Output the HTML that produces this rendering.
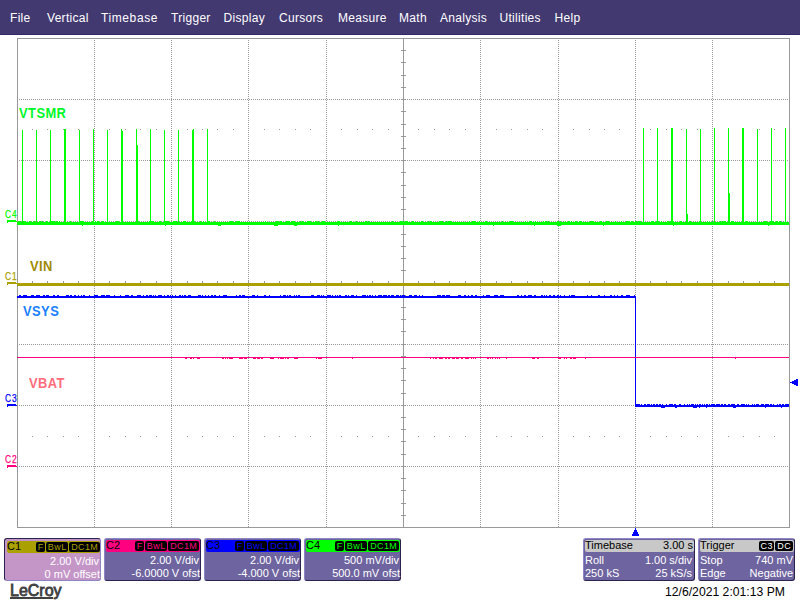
<!DOCTYPE html>
<html><head><meta charset="utf-8">
<style>
*{margin:0;padding:0;box-sizing:border-box}
html,body{width:800px;height:600px;overflow:hidden;background:#fff;font-family:"Liberation Sans",sans-serif}
.a{position:absolute;white-space:nowrap}
#menu{position:absolute;left:0;top:0;width:800px;height:35px;background:#433971;border-bottom:1px solid #302868}
#menu span{position:absolute;top:11px;color:#fff;font-size:12px;line-height:14px;letter-spacing:0.3px}
svg{position:absolute;left:0;top:0}
.lbl{position:absolute;font-weight:bold;font-size:14px;line-height:16px;letter-spacing:0.5px;transform:scaleX(0.92);transform-origin:0 0}
.ch{position:absolute;font-size:10px;line-height:10px;letter-spacing:1px;transform:scaleX(0.84);transform-origin:0 0;-webkit-text-stroke:0.25px currentColor}
.pt{font-size:11px;line-height:11px;color:#fff}
.ht{font-size:11px;line-height:12px;color:#000}
.bd{height:10px;font-size:9px;line-height:11px;text-align:center;border-radius:2px;letter-spacing:0.4px;text-indent:0.4px}
</style></head><body>
<div id="menu">
<span style="left:10px">File</span>
<span style="left:47px">Vertical</span>
<span style="left:101px;letter-spacing:0.6px">Timebase</span>
<span style="left:171px">Trigger</span>
<span style="left:223.5px">Display</span>
<span style="left:279px">Cursors</span>
<span style="left:338px">Measure</span>
<span style="left:399px">Math</span>
<span style="left:440px">Analysis</span>
<span style="left:499.5px">Utilities</span>
<span style="left:554.5px">Help</span>
</div>
<svg width="800" height="600" shape-rendering="crispEdges">
<defs>
<pattern id="pv" width="1" height="2" patternUnits="userSpaceOnUse"><rect width="1" height="1" fill="#999999"/></pattern>
<pattern id="ph" width="2" height="1" patternUnits="userSpaceOnUse"><rect x="1" width="1" height="1" fill="#999999"/></pattern>
</defs>
<rect x="94" y="39" width="1" height="488" fill="url(#pv)"/>
<rect x="171" y="39" width="1" height="488" fill="url(#pv)"/>
<rect x="248" y="39" width="1" height="488" fill="url(#pv)"/>
<rect x="326" y="39" width="1" height="488" fill="url(#pv)"/>
<rect x="480" y="39" width="1" height="488" fill="url(#pv)"/>
<rect x="558" y="39" width="1" height="488" fill="url(#pv)"/>
<rect x="635" y="39" width="1" height="488" fill="url(#pv)"/>
<rect x="712" y="39" width="1" height="488" fill="url(#pv)"/>
<rect x="18" y="99" width="771" height="1" fill="url(#ph)"/>
<rect x="18" y="160" width="771" height="1" fill="url(#ph)"/>
<rect x="18" y="221" width="771" height="1" fill="url(#ph)"/>
<rect x="18" y="344" width="771" height="1" fill="url(#ph)"/>
<rect x="18" y="405" width="771" height="1" fill="url(#ph)"/>
<rect x="18" y="466" width="771" height="1" fill="url(#ph)"/>
<rect x="17" y="38" width="773" height="1" fill="#999999"/>
<rect x="17" y="527" width="773" height="1" fill="#999999"/>
<rect x="17" y="38" width="1" height="490" fill="#999999"/>
<rect x="789" y="38" width="1" height="490" fill="#999999"/>
<rect x="403" y="39" width="1" height="488" fill="#999999"/>
<rect x="18" y="283" width="771" height="1" fill="#999999"/>
<rect x="401" y="50" width="5" height="1" fill="#999999"/>
<rect x="401" y="62" width="5" height="1" fill="#999999"/>
<rect x="401" y="75" width="5" height="1" fill="#999999"/>
<rect x="401" y="87" width="5" height="1" fill="#999999"/>
<rect x="401" y="99" width="5" height="1" fill="#999999"/>
<rect x="401" y="111" width="5" height="1" fill="#999999"/>
<rect x="401" y="124" width="5" height="1" fill="#999999"/>
<rect x="401" y="136" width="5" height="1" fill="#999999"/>
<rect x="401" y="148" width="5" height="1" fill="#999999"/>
<rect x="401" y="160" width="5" height="1" fill="#999999"/>
<rect x="401" y="172" width="5" height="1" fill="#999999"/>
<rect x="401" y="185" width="5" height="1" fill="#999999"/>
<rect x="401" y="197" width="5" height="1" fill="#999999"/>
<rect x="401" y="209" width="5" height="1" fill="#999999"/>
<rect x="401" y="221" width="5" height="1" fill="#999999"/>
<rect x="401" y="234" width="5" height="1" fill="#999999"/>
<rect x="401" y="246" width="5" height="1" fill="#999999"/>
<rect x="401" y="258" width="5" height="1" fill="#999999"/>
<rect x="401" y="270" width="5" height="1" fill="#999999"/>
<rect x="401" y="295" width="5" height="1" fill="#999999"/>
<rect x="401" y="307" width="5" height="1" fill="#999999"/>
<rect x="401" y="319" width="5" height="1" fill="#999999"/>
<rect x="401" y="331" width="5" height="1" fill="#999999"/>
<rect x="401" y="344" width="5" height="1" fill="#999999"/>
<rect x="401" y="356" width="5" height="1" fill="#999999"/>
<rect x="401" y="368" width="5" height="1" fill="#999999"/>
<rect x="401" y="380" width="5" height="1" fill="#999999"/>
<rect x="401" y="393" width="5" height="1" fill="#999999"/>
<rect x="401" y="405" width="5" height="1" fill="#999999"/>
<rect x="401" y="417" width="5" height="1" fill="#999999"/>
<rect x="401" y="429" width="5" height="1" fill="#999999"/>
<rect x="401" y="441" width="5" height="1" fill="#999999"/>
<rect x="401" y="454" width="5" height="1" fill="#999999"/>
<rect x="401" y="466" width="5" height="1" fill="#999999"/>
<rect x="401" y="478" width="5" height="1" fill="#999999"/>
<rect x="401" y="490" width="5" height="1" fill="#999999"/>
<rect x="401" y="503" width="5" height="1" fill="#999999"/>
<rect x="401" y="515" width="5" height="1" fill="#999999"/>
<rect x="32" y="281" width="1" height="5" fill="#999999"/>
<rect x="47" y="281" width="1" height="5" fill="#999999"/>
<rect x="63" y="281" width="1" height="5" fill="#999999"/>
<rect x="78" y="281" width="1" height="5" fill="#999999"/>
<rect x="94" y="281" width="1" height="5" fill="#999999"/>
<rect x="109" y="281" width="1" height="5" fill="#999999"/>
<rect x="125" y="281" width="1" height="5" fill="#999999"/>
<rect x="140" y="281" width="1" height="5" fill="#999999"/>
<rect x="156" y="281" width="1" height="5" fill="#999999"/>
<rect x="171" y="281" width="1" height="5" fill="#999999"/>
<rect x="187" y="281" width="1" height="5" fill="#999999"/>
<rect x="202" y="281" width="1" height="5" fill="#999999"/>
<rect x="217" y="281" width="1" height="5" fill="#999999"/>
<rect x="233" y="281" width="1" height="5" fill="#999999"/>
<rect x="248" y="281" width="1" height="5" fill="#999999"/>
<rect x="264" y="281" width="1" height="5" fill="#999999"/>
<rect x="279" y="281" width="1" height="5" fill="#999999"/>
<rect x="295" y="281" width="1" height="5" fill="#999999"/>
<rect x="310" y="281" width="1" height="5" fill="#999999"/>
<rect x="326" y="281" width="1" height="5" fill="#999999"/>
<rect x="341" y="281" width="1" height="5" fill="#999999"/>
<rect x="357" y="281" width="1" height="5" fill="#999999"/>
<rect x="372" y="281" width="1" height="5" fill="#999999"/>
<rect x="388" y="281" width="1" height="5" fill="#999999"/>
<rect x="403" y="281" width="1" height="5" fill="#999999"/>
<rect x="418" y="281" width="1" height="5" fill="#999999"/>
<rect x="434" y="281" width="1" height="5" fill="#999999"/>
<rect x="449" y="281" width="1" height="5" fill="#999999"/>
<rect x="465" y="281" width="1" height="5" fill="#999999"/>
<rect x="480" y="281" width="1" height="5" fill="#999999"/>
<rect x="496" y="281" width="1" height="5" fill="#999999"/>
<rect x="511" y="281" width="1" height="5" fill="#999999"/>
<rect x="527" y="281" width="1" height="5" fill="#999999"/>
<rect x="542" y="281" width="1" height="5" fill="#999999"/>
<rect x="558" y="281" width="1" height="5" fill="#999999"/>
<rect x="573" y="281" width="1" height="5" fill="#999999"/>
<rect x="589" y="281" width="1" height="5" fill="#999999"/>
<rect x="604" y="281" width="1" height="5" fill="#999999"/>
<rect x="619" y="281" width="1" height="5" fill="#999999"/>
<rect x="635" y="281" width="1" height="5" fill="#999999"/>
<rect x="650" y="281" width="1" height="5" fill="#999999"/>
<rect x="666" y="281" width="1" height="5" fill="#999999"/>
<rect x="681" y="281" width="1" height="5" fill="#999999"/>
<rect x="697" y="281" width="1" height="5" fill="#999999"/>
<rect x="712" y="281" width="1" height="5" fill="#999999"/>
<rect x="728" y="281" width="1" height="5" fill="#999999"/>
<rect x="743" y="281" width="1" height="5" fill="#999999"/>
<rect x="759" y="281" width="1" height="5" fill="#999999"/>
<rect x="774" y="281" width="1" height="5" fill="#999999"/>
<rect x="32" y="129" width="1" height="1" fill="#999999"/>
<rect x="32" y="436" width="1" height="1" fill="#999999"/>
<rect x="47" y="129" width="1" height="1" fill="#999999"/>
<rect x="47" y="436" width="1" height="1" fill="#999999"/>
<rect x="63" y="129" width="1" height="1" fill="#999999"/>
<rect x="63" y="436" width="1" height="1" fill="#999999"/>
<rect x="78" y="129" width="1" height="1" fill="#999999"/>
<rect x="78" y="436" width="1" height="1" fill="#999999"/>
<rect x="109" y="129" width="1" height="1" fill="#999999"/>
<rect x="109" y="436" width="1" height="1" fill="#999999"/>
<rect x="125" y="129" width="1" height="1" fill="#999999"/>
<rect x="125" y="436" width="1" height="1" fill="#999999"/>
<rect x="140" y="129" width="1" height="1" fill="#999999"/>
<rect x="140" y="436" width="1" height="1" fill="#999999"/>
<rect x="156" y="129" width="1" height="1" fill="#999999"/>
<rect x="156" y="436" width="1" height="1" fill="#999999"/>
<rect x="187" y="129" width="1" height="1" fill="#999999"/>
<rect x="187" y="436" width="1" height="1" fill="#999999"/>
<rect x="202" y="129" width="1" height="1" fill="#999999"/>
<rect x="202" y="436" width="1" height="1" fill="#999999"/>
<rect x="217" y="129" width="1" height="1" fill="#999999"/>
<rect x="217" y="436" width="1" height="1" fill="#999999"/>
<rect x="233" y="129" width="1" height="1" fill="#999999"/>
<rect x="233" y="436" width="1" height="1" fill="#999999"/>
<rect x="264" y="129" width="1" height="1" fill="#999999"/>
<rect x="264" y="436" width="1" height="1" fill="#999999"/>
<rect x="279" y="129" width="1" height="1" fill="#999999"/>
<rect x="279" y="436" width="1" height="1" fill="#999999"/>
<rect x="295" y="129" width="1" height="1" fill="#999999"/>
<rect x="295" y="436" width="1" height="1" fill="#999999"/>
<rect x="310" y="129" width="1" height="1" fill="#999999"/>
<rect x="310" y="436" width="1" height="1" fill="#999999"/>
<rect x="341" y="129" width="1" height="1" fill="#999999"/>
<rect x="341" y="436" width="1" height="1" fill="#999999"/>
<rect x="357" y="129" width="1" height="1" fill="#999999"/>
<rect x="357" y="436" width="1" height="1" fill="#999999"/>
<rect x="372" y="129" width="1" height="1" fill="#999999"/>
<rect x="372" y="436" width="1" height="1" fill="#999999"/>
<rect x="388" y="129" width="1" height="1" fill="#999999"/>
<rect x="388" y="436" width="1" height="1" fill="#999999"/>
<rect x="418" y="129" width="1" height="1" fill="#999999"/>
<rect x="418" y="436" width="1" height="1" fill="#999999"/>
<rect x="434" y="129" width="1" height="1" fill="#999999"/>
<rect x="434" y="436" width="1" height="1" fill="#999999"/>
<rect x="449" y="129" width="1" height="1" fill="#999999"/>
<rect x="449" y="436" width="1" height="1" fill="#999999"/>
<rect x="465" y="129" width="1" height="1" fill="#999999"/>
<rect x="465" y="436" width="1" height="1" fill="#999999"/>
<rect x="496" y="129" width="1" height="1" fill="#999999"/>
<rect x="496" y="436" width="1" height="1" fill="#999999"/>
<rect x="511" y="129" width="1" height="1" fill="#999999"/>
<rect x="511" y="436" width="1" height="1" fill="#999999"/>
<rect x="527" y="129" width="1" height="1" fill="#999999"/>
<rect x="527" y="436" width="1" height="1" fill="#999999"/>
<rect x="542" y="129" width="1" height="1" fill="#999999"/>
<rect x="542" y="436" width="1" height="1" fill="#999999"/>
<rect x="573" y="129" width="1" height="1" fill="#999999"/>
<rect x="573" y="436" width="1" height="1" fill="#999999"/>
<rect x="589" y="129" width="1" height="1" fill="#999999"/>
<rect x="589" y="436" width="1" height="1" fill="#999999"/>
<rect x="604" y="129" width="1" height="1" fill="#999999"/>
<rect x="604" y="436" width="1" height="1" fill="#999999"/>
<rect x="619" y="129" width="1" height="1" fill="#999999"/>
<rect x="619" y="436" width="1" height="1" fill="#999999"/>
<rect x="650" y="129" width="1" height="1" fill="#999999"/>
<rect x="650" y="436" width="1" height="1" fill="#999999"/>
<rect x="666" y="129" width="1" height="1" fill="#999999"/>
<rect x="666" y="436" width="1" height="1" fill="#999999"/>
<rect x="681" y="129" width="1" height="1" fill="#999999"/>
<rect x="681" y="436" width="1" height="1" fill="#999999"/>
<rect x="697" y="129" width="1" height="1" fill="#999999"/>
<rect x="697" y="436" width="1" height="1" fill="#999999"/>
<rect x="728" y="129" width="1" height="1" fill="#999999"/>
<rect x="728" y="436" width="1" height="1" fill="#999999"/>
<rect x="743" y="129" width="1" height="1" fill="#999999"/>
<rect x="743" y="436" width="1" height="1" fill="#999999"/>
<rect x="759" y="129" width="1" height="1" fill="#999999"/>
<rect x="759" y="436" width="1" height="1" fill="#999999"/>
<rect x="774" y="129" width="1" height="1" fill="#999999"/>
<rect x="774" y="436" width="1" height="1" fill="#999999"/>
<rect x="17" y="222" width="772" height="3" fill="#00ff00"/>
<rect x="18" y="221" width="3" height="1" fill="#00ff00"/>
<rect x="22" y="221" width="4" height="1" fill="#00ff00"/>
<rect x="29" y="221" width="2" height="1" fill="#00ff00"/>
<rect x="33" y="221" width="2" height="1" fill="#00ff00"/>
<rect x="36" y="221" width="1" height="1" fill="#00ff00"/>
<rect x="39" y="221" width="2" height="1" fill="#00ff00"/>
<rect x="42" y="221" width="1" height="1" fill="#00ff00"/>
<rect x="46" y="221" width="2" height="1" fill="#00ff00"/>
<rect x="51" y="221" width="4" height="1" fill="#00ff00"/>
<rect x="56" y="221" width="2" height="1" fill="#00ff00"/>
<rect x="59" y="221" width="1" height="1" fill="#00ff00"/>
<rect x="64" y="221" width="2" height="1" fill="#00ff00"/>
<rect x="70" y="221" width="1" height="1" fill="#00ff00"/>
<rect x="80" y="221" width="4" height="1" fill="#00ff00"/>
<rect x="92" y="221" width="2" height="1" fill="#00ff00"/>
<rect x="95" y="221" width="1" height="1" fill="#00ff00"/>
<rect x="97" y="221" width="2" height="1" fill="#00ff00"/>
<rect x="102" y="221" width="2" height="1" fill="#00ff00"/>
<rect x="116" y="221" width="3" height="1" fill="#00ff00"/>
<rect x="137" y="221" width="2" height="1" fill="#00ff00"/>
<rect x="149" y="221" width="1" height="1" fill="#00ff00"/>
<rect x="151" y="221" width="3" height="1" fill="#00ff00"/>
<rect x="159" y="221" width="2" height="1" fill="#00ff00"/>
<rect x="165" y="221" width="4" height="1" fill="#00ff00"/>
<rect x="173" y="221" width="4" height="1" fill="#00ff00"/>
<rect x="183" y="221" width="3" height="1" fill="#00ff00"/>
<rect x="191" y="221" width="2" height="1" fill="#00ff00"/>
<rect x="194" y="221" width="1" height="1" fill="#00ff00"/>
<rect x="200" y="221" width="1" height="1" fill="#00ff00"/>
<rect x="203" y="221" width="1" height="1" fill="#00ff00"/>
<rect x="208" y="221" width="2" height="1" fill="#00ff00"/>
<rect x="214" y="221" width="1" height="1" fill="#00ff00"/>
<rect x="229" y="221" width="4" height="1" fill="#00ff00"/>
<rect x="236" y="221" width="4" height="1" fill="#00ff00"/>
<rect x="265" y="221" width="1" height="1" fill="#00ff00"/>
<rect x="276" y="221" width="3" height="1" fill="#00ff00"/>
<rect x="280" y="221" width="2" height="1" fill="#00ff00"/>
<rect x="286" y="221" width="4" height="1" fill="#00ff00"/>
<rect x="292" y="221" width="3" height="1" fill="#00ff00"/>
<rect x="300" y="221" width="1" height="1" fill="#00ff00"/>
<rect x="302" y="221" width="2" height="1" fill="#00ff00"/>
<rect x="307" y="221" width="4" height="1" fill="#00ff00"/>
<rect x="315" y="221" width="2" height="1" fill="#00ff00"/>
<rect x="318" y="221" width="1" height="1" fill="#00ff00"/>
<rect x="322" y="221" width="3" height="1" fill="#00ff00"/>
<rect x="337" y="221" width="3" height="1" fill="#00ff00"/>
<rect x="350" y="221" width="2" height="1" fill="#00ff00"/>
<rect x="356" y="221" width="1" height="1" fill="#00ff00"/>
<rect x="365" y="221" width="2" height="1" fill="#00ff00"/>
<rect x="368" y="221" width="1" height="1" fill="#00ff00"/>
<rect x="392" y="221" width="1" height="1" fill="#00ff00"/>
<rect x="400" y="221" width="4" height="1" fill="#00ff00"/>
<rect x="405" y="221" width="3" height="1" fill="#00ff00"/>
<rect x="412" y="221" width="2" height="1" fill="#00ff00"/>
<rect x="421" y="221" width="2" height="1" fill="#00ff00"/>
<rect x="428" y="221" width="1" height="1" fill="#00ff00"/>
<rect x="430" y="221" width="2" height="1" fill="#00ff00"/>
<rect x="439" y="221" width="4" height="1" fill="#00ff00"/>
<rect x="446" y="221" width="1" height="1" fill="#00ff00"/>
<rect x="448" y="221" width="4" height="1" fill="#00ff00"/>
<rect x="469" y="221" width="1" height="1" fill="#00ff00"/>
<rect x="472" y="221" width="4" height="1" fill="#00ff00"/>
<rect x="479" y="221" width="1" height="1" fill="#00ff00"/>
<rect x="485" y="221" width="2" height="1" fill="#00ff00"/>
<rect x="502" y="221" width="1" height="1" fill="#00ff00"/>
<rect x="509" y="221" width="4" height="1" fill="#00ff00"/>
<rect x="525" y="221" width="1" height="1" fill="#00ff00"/>
<rect x="529" y="221" width="3" height="1" fill="#00ff00"/>
<rect x="535" y="221" width="1" height="1" fill="#00ff00"/>
<rect x="543" y="221" width="1" height="1" fill="#00ff00"/>
<rect x="545" y="221" width="2" height="1" fill="#00ff00"/>
<rect x="548" y="221" width="1" height="1" fill="#00ff00"/>
<rect x="557" y="221" width="2" height="1" fill="#00ff00"/>
<rect x="560" y="221" width="1" height="1" fill="#00ff00"/>
<rect x="565" y="221" width="1" height="1" fill="#00ff00"/>
<rect x="568" y="221" width="2" height="1" fill="#00ff00"/>
<rect x="571" y="221" width="1" height="1" fill="#00ff00"/>
<rect x="575" y="221" width="2" height="1" fill="#00ff00"/>
<rect x="579" y="221" width="3" height="1" fill="#00ff00"/>
<rect x="590" y="221" width="4" height="1" fill="#00ff00"/>
<rect x="600" y="221" width="2" height="1" fill="#00ff00"/>
<rect x="606" y="221" width="3" height="1" fill="#00ff00"/>
<rect x="615" y="221" width="1" height="1" fill="#00ff00"/>
<rect x="621" y="221" width="1" height="1" fill="#00ff00"/>
<rect x="626" y="221" width="4" height="1" fill="#00ff00"/>
<rect x="631" y="221" width="2" height="1" fill="#00ff00"/>
<rect x="635" y="221" width="2" height="1" fill="#00ff00"/>
<rect x="638" y="221" width="3" height="1" fill="#00ff00"/>
<rect x="651" y="221" width="3" height="1" fill="#00ff00"/>
<rect x="656" y="221" width="3" height="1" fill="#00ff00"/>
<rect x="661" y="221" width="1" height="1" fill="#00ff00"/>
<rect x="667" y="221" width="2" height="1" fill="#00ff00"/>
<rect x="670" y="221" width="1" height="1" fill="#00ff00"/>
<rect x="673" y="221" width="1" height="1" fill="#00ff00"/>
<rect x="680" y="221" width="2" height="1" fill="#00ff00"/>
<rect x="686" y="221" width="2" height="1" fill="#00ff00"/>
<rect x="689" y="221" width="2" height="1" fill="#00ff00"/>
<rect x="699" y="221" width="2" height="1" fill="#00ff00"/>
<rect x="707" y="221" width="1" height="1" fill="#00ff00"/>
<rect x="712" y="221" width="1" height="1" fill="#00ff00"/>
<rect x="720" y="221" width="1" height="1" fill="#00ff00"/>
<rect x="722" y="221" width="4" height="1" fill="#00ff00"/>
<rect x="731" y="221" width="3" height="1" fill="#00ff00"/>
<rect x="743" y="221" width="1" height="1" fill="#00ff00"/>
<rect x="745" y="221" width="3" height="1" fill="#00ff00"/>
<rect x="764" y="221" width="3" height="1" fill="#00ff00"/>
<rect x="770" y="221" width="4" height="1" fill="#00ff00"/>
<rect x="776" y="221" width="2" height="1" fill="#00ff00"/>
<rect x="779" y="221" width="2" height="1" fill="#00ff00"/>
<rect x="82" y="225" width="1" height="1" fill="#00ff00"/>
<rect x="165" y="225" width="1" height="1" fill="#00ff00"/>
<rect x="218" y="225" width="3" height="1" fill="#00ff00"/>
<rect x="274" y="225" width="4" height="1" fill="#00ff00"/>
<rect x="294" y="225" width="3" height="1" fill="#00ff00"/>
<rect x="338" y="225" width="1" height="1" fill="#00ff00"/>
<rect x="493" y="225" width="1" height="1" fill="#00ff00"/>
<rect x="534" y="225" width="1" height="1" fill="#00ff00"/>
<rect x="557" y="225" width="4" height="1" fill="#00ff00"/>
<rect x="603" y="225" width="1" height="1" fill="#00ff00"/>
<rect x="673" y="225" width="1" height="1" fill="#00ff00"/>
<rect x="768" y="225" width="1" height="1" fill="#00ff00"/>
<rect x="22" y="130" width="1" height="92" fill="#00ff00"/>
<rect x="36" y="130" width="1" height="92" fill="#00ff00"/>
<rect x="50" y="130" width="1" height="92" fill="#00ff00"/>
<rect x="64" y="129" width="2" height="93" fill="#00ff00"/>
<rect x="79" y="130" width="1" height="92" fill="#00ff00"/>
<rect x="93" y="129" width="1" height="93" fill="#00ff00"/>
<rect x="107" y="130" width="1" height="92" fill="#00ff00"/>
<rect x="121" y="129" width="1" height="93" fill="#00ff00"/>
<rect x="122" y="131" width="1" height="91" fill="#00ff00"/>
<rect x="136" y="129" width="1" height="93" fill="#00ff00"/>
<rect x="150" y="129" width="1" height="93" fill="#00ff00"/>
<rect x="164" y="130" width="1" height="92" fill="#00ff00"/>
<rect x="178" y="130" width="1" height="92" fill="#00ff00"/>
<rect x="192" y="130" width="1" height="92" fill="#00ff00"/>
<rect x="193" y="129" width="1" height="93" fill="#00ff00"/>
<rect x="207" y="129" width="1" height="93" fill="#00ff00"/>
<rect x="643" y="128" width="1" height="94" fill="#00ff00"/>
<rect x="657" y="128" width="1" height="94" fill="#00ff00"/>
<rect x="671" y="128" width="2" height="94" fill="#00ff00"/>
<rect x="686" y="129" width="1" height="93" fill="#00ff00"/>
<rect x="700" y="129" width="1" height="93" fill="#00ff00"/>
<rect x="714" y="128" width="1" height="94" fill="#00ff00"/>
<rect x="728" y="128" width="1" height="94" fill="#00ff00"/>
<rect x="742" y="128" width="2" height="94" fill="#00ff00"/>
<rect x="757" y="129" width="1" height="93" fill="#00ff00"/>
<rect x="771" y="128" width="1" height="94" fill="#00ff00"/>
<rect x="785" y="128" width="1" height="94" fill="#00ff00"/>
<rect x="136" y="145" width="2" height="77" fill="#00ff00"/>
<rect x="686" y="214" width="2" height="8" fill="#00ff00"/>
<rect x="728" y="193" width="2" height="29" fill="#00ff00"/>
<rect x="17" y="283" width="772" height="3" fill="#aaa000"/>
<rect x="17" y="296" width="618" height="2" fill="#0000ff"/>
<rect x="19" y="295" width="2" height="1" fill="#0000ff"/>
<rect x="23" y="295" width="4" height="1" fill="#0000ff"/>
<rect x="31" y="295" width="3" height="1" fill="#0000ff"/>
<rect x="36" y="295" width="4" height="1" fill="#0000ff"/>
<rect x="43" y="295" width="2" height="1" fill="#0000ff"/>
<rect x="46" y="295" width="3" height="1" fill="#0000ff"/>
<rect x="53" y="295" width="2" height="1" fill="#0000ff"/>
<rect x="57" y="295" width="2" height="1" fill="#0000ff"/>
<rect x="66" y="295" width="3" height="1" fill="#0000ff"/>
<rect x="70" y="295" width="2" height="1" fill="#0000ff"/>
<rect x="74" y="295" width="2" height="1" fill="#0000ff"/>
<rect x="78" y="295" width="1" height="1" fill="#0000ff"/>
<rect x="81" y="295" width="1" height="1" fill="#0000ff"/>
<rect x="83" y="295" width="2" height="1" fill="#0000ff"/>
<rect x="89" y="295" width="1" height="1" fill="#0000ff"/>
<rect x="94" y="295" width="4" height="1" fill="#0000ff"/>
<rect x="101" y="295" width="4" height="1" fill="#0000ff"/>
<rect x="106" y="295" width="4" height="1" fill="#0000ff"/>
<rect x="114" y="295" width="1" height="1" fill="#0000ff"/>
<rect x="120" y="295" width="1" height="1" fill="#0000ff"/>
<rect x="125" y="295" width="4" height="1" fill="#0000ff"/>
<rect x="131" y="295" width="2" height="1" fill="#0000ff"/>
<rect x="137" y="295" width="4" height="1" fill="#0000ff"/>
<rect x="143" y="295" width="1" height="1" fill="#0000ff"/>
<rect x="146" y="295" width="2" height="1" fill="#0000ff"/>
<rect x="149" y="295" width="3" height="1" fill="#0000ff"/>
<rect x="153" y="295" width="1" height="1" fill="#0000ff"/>
<rect x="155" y="295" width="1" height="1" fill="#0000ff"/>
<rect x="158" y="295" width="4" height="1" fill="#0000ff"/>
<rect x="164" y="295" width="1" height="1" fill="#0000ff"/>
<rect x="167" y="295" width="2" height="1" fill="#0000ff"/>
<rect x="170" y="295" width="1" height="1" fill="#0000ff"/>
<rect x="172" y="295" width="1" height="1" fill="#0000ff"/>
<rect x="175" y="295" width="1" height="1" fill="#0000ff"/>
<rect x="179" y="295" width="2" height="1" fill="#0000ff"/>
<rect x="182" y="295" width="1" height="1" fill="#0000ff"/>
<rect x="184" y="295" width="2" height="1" fill="#0000ff"/>
<rect x="188" y="295" width="3" height="1" fill="#0000ff"/>
<rect x="198" y="295" width="3" height="1" fill="#0000ff"/>
<rect x="202" y="295" width="1" height="1" fill="#0000ff"/>
<rect x="205" y="295" width="1" height="1" fill="#0000ff"/>
<rect x="208" y="295" width="1" height="1" fill="#0000ff"/>
<rect x="211" y="295" width="2" height="1" fill="#0000ff"/>
<rect x="214" y="295" width="2" height="1" fill="#0000ff"/>
<rect x="219" y="295" width="1" height="1" fill="#0000ff"/>
<rect x="223" y="295" width="4" height="1" fill="#0000ff"/>
<rect x="236" y="295" width="1" height="1" fill="#0000ff"/>
<rect x="239" y="295" width="2" height="1" fill="#0000ff"/>
<rect x="242" y="295" width="3" height="1" fill="#0000ff"/>
<rect x="252" y="295" width="3" height="1" fill="#0000ff"/>
<rect x="257" y="295" width="1" height="1" fill="#0000ff"/>
<rect x="264" y="295" width="2" height="1" fill="#0000ff"/>
<rect x="269" y="295" width="1" height="1" fill="#0000ff"/>
<rect x="280" y="295" width="1" height="1" fill="#0000ff"/>
<rect x="283" y="295" width="3" height="1" fill="#0000ff"/>
<rect x="287" y="295" width="1" height="1" fill="#0000ff"/>
<rect x="289" y="295" width="2" height="1" fill="#0000ff"/>
<rect x="294" y="295" width="1" height="1" fill="#0000ff"/>
<rect x="296" y="295" width="1" height="1" fill="#0000ff"/>
<rect x="298" y="295" width="2" height="1" fill="#0000ff"/>
<rect x="311" y="295" width="3" height="1" fill="#0000ff"/>
<rect x="317" y="295" width="3" height="1" fill="#0000ff"/>
<rect x="321" y="295" width="1" height="1" fill="#0000ff"/>
<rect x="323" y="295" width="1" height="1" fill="#0000ff"/>
<rect x="327" y="295" width="4" height="1" fill="#0000ff"/>
<rect x="332" y="295" width="1" height="1" fill="#0000ff"/>
<rect x="335" y="295" width="1" height="1" fill="#0000ff"/>
<rect x="337" y="295" width="1" height="1" fill="#0000ff"/>
<rect x="339" y="295" width="2" height="1" fill="#0000ff"/>
<rect x="345" y="295" width="2" height="1" fill="#0000ff"/>
<rect x="348" y="295" width="1" height="1" fill="#0000ff"/>
<rect x="351" y="295" width="3" height="1" fill="#0000ff"/>
<rect x="356" y="295" width="1" height="1" fill="#0000ff"/>
<rect x="362" y="295" width="4" height="1" fill="#0000ff"/>
<rect x="367" y="295" width="1" height="1" fill="#0000ff"/>
<rect x="369" y="295" width="2" height="1" fill="#0000ff"/>
<rect x="372" y="295" width="1" height="1" fill="#0000ff"/>
<rect x="375" y="295" width="1" height="1" fill="#0000ff"/>
<rect x="378" y="295" width="4" height="1" fill="#0000ff"/>
<rect x="383" y="295" width="4" height="1" fill="#0000ff"/>
<rect x="388" y="295" width="2" height="1" fill="#0000ff"/>
<rect x="391" y="295" width="3" height="1" fill="#0000ff"/>
<rect x="396" y="295" width="3" height="1" fill="#0000ff"/>
<rect x="400" y="295" width="1" height="1" fill="#0000ff"/>
<rect x="402" y="295" width="3" height="1" fill="#0000ff"/>
<rect x="409" y="295" width="3" height="1" fill="#0000ff"/>
<rect x="414" y="295" width="3" height="1" fill="#0000ff"/>
<rect x="419" y="295" width="1" height="1" fill="#0000ff"/>
<rect x="422" y="295" width="1" height="1" fill="#0000ff"/>
<rect x="437" y="295" width="4" height="1" fill="#0000ff"/>
<rect x="442" y="295" width="3" height="1" fill="#0000ff"/>
<rect x="446" y="295" width="4" height="1" fill="#0000ff"/>
<rect x="458" y="295" width="3" height="1" fill="#0000ff"/>
<rect x="464" y="295" width="2" height="1" fill="#0000ff"/>
<rect x="468" y="295" width="1" height="1" fill="#0000ff"/>
<rect x="471" y="295" width="2" height="1" fill="#0000ff"/>
<rect x="475" y="295" width="2" height="1" fill="#0000ff"/>
<rect x="483" y="295" width="1" height="1" fill="#0000ff"/>
<rect x="486" y="295" width="4" height="1" fill="#0000ff"/>
<rect x="494" y="295" width="4" height="1" fill="#0000ff"/>
<rect x="500" y="295" width="4" height="1" fill="#0000ff"/>
<rect x="517" y="295" width="2" height="1" fill="#0000ff"/>
<rect x="521" y="295" width="1" height="1" fill="#0000ff"/>
<rect x="524" y="295" width="2" height="1" fill="#0000ff"/>
<rect x="528" y="295" width="4" height="1" fill="#0000ff"/>
<rect x="534" y="295" width="2" height="1" fill="#0000ff"/>
<rect x="541" y="295" width="2" height="1" fill="#0000ff"/>
<rect x="544" y="295" width="1" height="1" fill="#0000ff"/>
<rect x="546" y="295" width="1" height="1" fill="#0000ff"/>
<rect x="549" y="295" width="2" height="1" fill="#0000ff"/>
<rect x="553" y="295" width="2" height="1" fill="#0000ff"/>
<rect x="557" y="295" width="2" height="1" fill="#0000ff"/>
<rect x="560" y="295" width="1" height="1" fill="#0000ff"/>
<rect x="564" y="295" width="1" height="1" fill="#0000ff"/>
<rect x="569" y="295" width="1" height="1" fill="#0000ff"/>
<rect x="571" y="295" width="4" height="1" fill="#0000ff"/>
<rect x="587" y="295" width="1" height="1" fill="#0000ff"/>
<rect x="591" y="295" width="1" height="1" fill="#0000ff"/>
<rect x="598" y="295" width="2" height="1" fill="#0000ff"/>
<rect x="604" y="295" width="1" height="1" fill="#0000ff"/>
<rect x="610" y="295" width="2" height="1" fill="#0000ff"/>
<rect x="614" y="295" width="1" height="1" fill="#0000ff"/>
<rect x="617" y="295" width="1" height="1" fill="#0000ff"/>
<rect x="621" y="295" width="2" height="1" fill="#0000ff"/>
<rect x="626" y="295" width="4" height="1" fill="#0000ff"/>
<rect x="634" y="295" width="1" height="1" fill="#0000ff"/>
<rect x="635" y="296" width="1" height="111" fill="#0000ff"/>
<rect x="635" y="405" width="154" height="2" fill="#0000ff"/>
<rect x="636" y="404" width="4" height="1" fill="#0000ff"/>
<rect x="641" y="404" width="1" height="1" fill="#0000ff"/>
<rect x="644" y="404" width="2" height="1" fill="#0000ff"/>
<rect x="647" y="404" width="3" height="1" fill="#0000ff"/>
<rect x="651" y="404" width="1" height="1" fill="#0000ff"/>
<rect x="653" y="404" width="2" height="1" fill="#0000ff"/>
<rect x="656" y="404" width="2" height="1" fill="#0000ff"/>
<rect x="659" y="404" width="2" height="1" fill="#0000ff"/>
<rect x="662" y="404" width="1" height="1" fill="#0000ff"/>
<rect x="666" y="404" width="1" height="1" fill="#0000ff"/>
<rect x="669" y="404" width="4" height="1" fill="#0000ff"/>
<rect x="674" y="404" width="2" height="1" fill="#0000ff"/>
<rect x="679" y="404" width="2" height="1" fill="#0000ff"/>
<rect x="684" y="404" width="1" height="1" fill="#0000ff"/>
<rect x="687" y="404" width="1" height="1" fill="#0000ff"/>
<rect x="689" y="404" width="1" height="1" fill="#0000ff"/>
<rect x="691" y="404" width="3" height="1" fill="#0000ff"/>
<rect x="695" y="404" width="1" height="1" fill="#0000ff"/>
<rect x="697" y="404" width="1" height="1" fill="#0000ff"/>
<rect x="699" y="404" width="2" height="1" fill="#0000ff"/>
<rect x="702" y="404" width="1" height="1" fill="#0000ff"/>
<rect x="704" y="404" width="1" height="1" fill="#0000ff"/>
<rect x="706" y="404" width="2" height="1" fill="#0000ff"/>
<rect x="709" y="404" width="1" height="1" fill="#0000ff"/>
<rect x="711" y="404" width="4" height="1" fill="#0000ff"/>
<rect x="716" y="404" width="4" height="1" fill="#0000ff"/>
<rect x="721" y="404" width="2" height="1" fill="#0000ff"/>
<rect x="724" y="404" width="2" height="1" fill="#0000ff"/>
<rect x="728" y="404" width="2" height="1" fill="#0000ff"/>
<rect x="731" y="404" width="4" height="1" fill="#0000ff"/>
<rect x="737" y="404" width="2" height="1" fill="#0000ff"/>
<rect x="741" y="404" width="4" height="1" fill="#0000ff"/>
<rect x="746" y="404" width="1" height="1" fill="#0000ff"/>
<rect x="748" y="404" width="1" height="1" fill="#0000ff"/>
<rect x="752" y="404" width="1" height="1" fill="#0000ff"/>
<rect x="754" y="404" width="1" height="1" fill="#0000ff"/>
<rect x="756" y="404" width="3" height="1" fill="#0000ff"/>
<rect x="761" y="404" width="3" height="1" fill="#0000ff"/>
<rect x="765" y="404" width="4" height="1" fill="#0000ff"/>
<rect x="770" y="404" width="2" height="1" fill="#0000ff"/>
<rect x="773" y="404" width="1" height="1" fill="#0000ff"/>
<rect x="777" y="404" width="1" height="1" fill="#0000ff"/>
<rect x="779" y="404" width="2" height="1" fill="#0000ff"/>
<rect x="782" y="404" width="2" height="1" fill="#0000ff"/>
<rect x="785" y="404" width="4" height="1" fill="#0000ff"/>
<rect x="661" y="407" width="4" height="1" fill="#0000ff"/>
<rect x="675" y="407" width="2" height="1" fill="#0000ff"/>
<rect x="693" y="407" width="4" height="1" fill="#0000ff"/>
<rect x="699" y="407" width="1" height="1" fill="#0000ff"/>
<rect x="706" y="407" width="1" height="1" fill="#0000ff"/>
<rect x="733" y="407" width="3" height="1" fill="#0000ff"/>
<rect x="765" y="407" width="1" height="1" fill="#0000ff"/>
<rect x="781" y="407" width="1" height="1" fill="#0000ff"/>
<rect x="17" y="357" width="772" height="1" fill="#ff0080"/>
<rect x="185" y="358" width="2" height="1" fill="#ff0080"/>
<rect x="190" y="358" width="2" height="1" fill="#ff0080"/>
<rect x="193" y="358" width="1" height="1" fill="#ff0080"/>
<rect x="197" y="358" width="3" height="1" fill="#ff0080"/>
<rect x="222" y="358" width="2" height="1" fill="#ff0080"/>
<rect x="225" y="358" width="1" height="1" fill="#ff0080"/>
<rect x="227" y="358" width="1" height="1" fill="#ff0080"/>
<rect x="229" y="358" width="4" height="1" fill="#ff0080"/>
<rect x="239" y="358" width="4" height="1" fill="#ff0080"/>
<rect x="244" y="358" width="3" height="1" fill="#ff0080"/>
<rect x="253" y="358" width="3" height="1" fill="#ff0080"/>
<rect x="257" y="358" width="3" height="1" fill="#ff0080"/>
<rect x="261" y="358" width="2" height="1" fill="#ff0080"/>
<rect x="270" y="358" width="4" height="1" fill="#ff0080"/>
<rect x="278" y="358" width="1" height="1" fill="#ff0080"/>
<rect x="280" y="358" width="4" height="1" fill="#ff0080"/>
<rect x="285" y="358" width="1" height="1" fill="#ff0080"/>
<rect x="287" y="358" width="2" height="1" fill="#ff0080"/>
<rect x="294" y="358" width="4" height="1" fill="#ff0080"/>
<rect x="316" y="358" width="1" height="1" fill="#ff0080"/>
<rect x="318" y="358" width="4" height="1" fill="#ff0080"/>
<rect x="430" y="358" width="1" height="1" fill="#ff0080"/>
<rect x="433" y="358" width="1" height="1" fill="#ff0080"/>
<rect x="435" y="358" width="2" height="1" fill="#ff0080"/>
<rect x="439" y="358" width="4" height="1" fill="#ff0080"/>
<rect x="445" y="358" width="2" height="1" fill="#ff0080"/>
<rect x="448" y="358" width="2" height="1" fill="#ff0080"/>
<rect x="452" y="358" width="3" height="1" fill="#ff0080"/>
<rect x="456" y="358" width="3" height="1" fill="#ff0080"/>
<rect x="461" y="358" width="2" height="1" fill="#ff0080"/>
<rect x="465" y="358" width="4" height="1" fill="#ff0080"/>
<rect x="471" y="358" width="1" height="1" fill="#ff0080"/>
<rect x="473" y="358" width="1" height="1" fill="#ff0080"/>
<rect x="475" y="358" width="1" height="1" fill="#ff0080"/>
<rect x="487" y="358" width="2" height="1" fill="#ff0080"/>
<rect x="490" y="358" width="1" height="1" fill="#ff0080"/>
<rect x="492" y="358" width="1" height="1" fill="#ff0080"/>
<rect x="495" y="358" width="1" height="1" fill="#ff0080"/>
<rect x="497" y="358" width="1" height="1" fill="#ff0080"/>
<rect x="499" y="358" width="1" height="1" fill="#ff0080"/>
<rect x="532" y="358" width="3" height="1" fill="#ff0080"/>
<rect x="537" y="358" width="2" height="1" fill="#ff0080"/>
<rect x="558" y="358" width="3" height="1" fill="#ff0080"/>
<rect x="564" y="358" width="1" height="1" fill="#ff0080"/>
<rect x="566" y="358" width="1" height="1" fill="#ff0080"/>
<rect x="570" y="358" width="2" height="1" fill="#ff0080"/>
<rect x="573" y="358" width="3" height="1" fill="#ff0080"/>
<rect x="352" y="358" width="1" height="1" fill="#ff0080"/>
<rect x="506" y="358" width="1" height="1" fill="#ff0080"/>
<rect x="585" y="358" width="1" height="1" fill="#ff0080"/>
<rect x="735" y="358" width="1" height="1" fill="#ff0080"/>
<rect x="7" y="220" width="9" height="1" fill="#00ff00"/>
<rect x="7" y="221" width="10" height="1" fill="#00ff00"/>
<rect x="7" y="222" width="1" height="1" fill="#00ff00"/>
<rect x="7" y="282" width="9" height="1" fill="#aaa000"/>
<rect x="7" y="283" width="10" height="1" fill="#aaa000"/>
<rect x="7" y="284" width="1" height="1" fill="#aaa000"/>
<rect x="7" y="404" width="9" height="1" fill="#0000ff"/>
<rect x="7" y="405" width="10" height="1" fill="#0000ff"/>
<rect x="7" y="406" width="1" height="1" fill="#0000ff"/>
<rect x="7" y="465" width="9" height="1" fill="#ff0080"/>
<rect x="7" y="466" width="10" height="1" fill="#ff0080"/>
<rect x="7" y="467" width="1" height="1" fill="#ff0080"/>
<rect x="796" y="379" width="2" height="1" fill="#0000ff"/>
<rect x="794" y="380" width="4" height="1" fill="#0000ff"/>
<rect x="792" y="381" width="6" height="1" fill="#0000ff"/>
<rect x="790" y="382" width="8" height="1" fill="#0000ff"/>
<rect x="792" y="383" width="6" height="1" fill="#0000ff"/>
<rect x="794" y="384" width="4" height="1" fill="#0000ff"/>
<rect x="796" y="385" width="2" height="1" fill="#0000ff"/>
<rect x="635" y="528" width="1" height="1" fill="#0000ff"/>
<rect x="635" y="529" width="1" height="1" fill="#0000ff"/>
<rect x="634" y="530" width="3" height="1" fill="#0000ff"/>
<rect x="634" y="531" width="3" height="1" fill="#0000ff"/>
<rect x="633" y="532" width="5" height="1" fill="#0000ff"/>
<rect x="633" y="533" width="5" height="1" fill="#0000ff"/>
<rect x="632" y="534" width="7" height="1" fill="#0000ff"/>
<rect x="632" y="535" width="7" height="1" fill="#0000ff"/>
</svg>
<div class="lbl" style="left:19px;top:105px;color:#00f828">VTSMR</div>
<div class="lbl" style="left:30px;top:258px;color:#a08a00">VIN</div>
<div class="lbl" style="left:23px;top:303px;color:#1a80ff">VSYS</div>
<div class="lbl" style="left:29px;top:375px;color:#ff6c7c">VBAT</div>
<div class="ch" style="left:5px;top:210px;color:#00ff00">C4</div>
<div class="ch" style="left:5px;top:272px;color:#aaa000">C1</div>
<div class="ch" style="left:5px;top:394px;color:#0000ff">C3</div>
<div class="ch" style="left:5px;top:455px;color:#ff0080">C2</div>

<div class="a" style="left:4px;top:538px;width:97px;height:43px;background:#c496c8;border-style:solid;border-width:1px;border-color:#2a2350 #8c84c4 #8c84c4 #2a2350;border-radius:3px"></div>
<div class="a" style="left:7px;top:541px;width:93px;height:12px;background:#aaa000;border-radius:2px"></div>
<div class="a ht" style="left:7px;top:540px">C1</div>
<div class="a bd" style="left:36px;top:542px;width:9px;background:#000;color:#aaa000">F</div>
<div class="a bd" style="left:46px;top:542px;width:22px;background:#000;color:#aaa000">BwL</div>
<div class="a bd" style="left:69px;top:542px;width:31px;background:#000;color:#aaa000">DC1M</div>
<div class="a pt" style="right:701px;top:556px">2.00 V/div</div>
<div class="a pt" style="right:700px;top:569px">0 mV offset</div>
<div class="a" style="left:104px;top:538px;width:97px;height:43px;background:#6e64a0;border-style:solid;border-width:1px;border-color:#8c84c4 #2a2350 #2a2350 #8c84c4;border-radius:3px"></div>
<div class="a" style="left:106px;top:540px;width:94px;height:12px;background:#ff0080;border-radius:2px"></div>
<div class="a ht" style="left:106px;top:539px">C2</div>
<div class="a bd" style="left:135px;top:541px;width:9px;background:#000;color:#ff0080">F</div>
<div class="a bd" style="left:145px;top:541px;width:22px;background:#000;color:#ff0080">BwL</div>
<div class="a bd" style="left:168px;top:541px;width:31px;background:#000;color:#ff0080">DC1M</div>
<div class="a pt" style="right:601px;top:555px">2.00 V/div</div>
<div class="a pt" style="right:600px;top:568px">-6.0000 V ofst</div>
<div class="a" style="left:204px;top:538px;width:97px;height:43px;background:#6e64a0;border-style:solid;border-width:1px;border-color:#8c84c4 #2a2350 #2a2350 #8c84c4;border-radius:3px"></div>
<div class="a" style="left:206px;top:540px;width:94px;height:12px;background:#0000ff;border-radius:2px"></div>
<div class="a ht" style="left:206px;top:539px">C3</div>
<div class="a bd" style="left:235px;top:541px;width:9px;background:#000;color:#0000ff">F</div>
<div class="a bd" style="left:245px;top:541px;width:22px;background:#000;color:#0000ff">BwL</div>
<div class="a bd" style="left:268px;top:541px;width:31px;background:#000;color:#0000ff">DC1M</div>
<div class="a pt" style="right:501px;top:555px">2.00 V/div</div>
<div class="a pt" style="right:500px;top:568px">-4.000 V ofst</div>
<div class="a" style="left:304px;top:538px;width:97px;height:43px;background:#6e64a0;border-style:solid;border-width:1px;border-color:#8c84c4 #2a2350 #2a2350 #8c84c4;border-radius:3px"></div>
<div class="a" style="left:306px;top:540px;width:94px;height:12px;background:#00ff00;border-radius:2px"></div>
<div class="a ht" style="left:306px;top:539px">C4</div>
<div class="a bd" style="left:335px;top:541px;width:9px;background:#000;color:#00ff00">F</div>
<div class="a bd" style="left:345px;top:541px;width:22px;background:#000;color:#00ff00">BwL</div>
<div class="a bd" style="left:368px;top:541px;width:31px;background:#000;color:#00ff00">DC1M</div>
<div class="a pt" style="right:401px;top:555px">500 mV/div</div>
<div class="a pt" style="right:400px;top:568px">500.0 mV ofst</div>
<div class="a" style="left:583px;top:538px;width:112px;height:43px;background:#6e64a0;border-style:solid;border-width:1px;border-color:#8c84c4 #2a2350 #2a2350 #8c84c4;border-radius:3px"></div>
<div class="a" style="left:585px;top:540px;width:109px;height:12px;background:#c8c8c8;border-radius:2px"></div>
<div class="a ht" style="left:585px;top:539px">Timebase</div>
<div class="a ht" style="right:107px;top:539px">3.00 s</div>
<div class="a pt" style="left:585px;top:555px">Roll</div>
<div class="a pt" style="right:108px;top:555px">1.00 s/div</div>
<div class="a pt" style="left:585px;top:568px">250 kS</div>
<div class="a pt" style="right:108px;top:568px">25 kS/s</div>
<div class="a" style="left:698px;top:538px;width:97px;height:43px;background:#6e64a0;border-style:solid;border-width:1px;border-color:#8c84c4 #2a2350 #2a2350 #8c84c4;border-radius:3px"></div>
<div class="a" style="left:700px;top:540px;width:94px;height:12px;background:#c8c8c8;border-radius:2px"></div>
<div class="a ht" style="left:700px;top:539px">Trigger</div>
<div class="a bd" style="left:759px;top:541px;width:15px;background:#000;color:#fff">C3</div>
<div class="a bd" style="left:775px;top:541px;width:18px;background:#000;color:#fff">DC</div>
<div class="a pt" style="left:700px;top:555px">Stop</div>
<div class="a pt" style="right:7px;top:555px">740 mV</div>
<div class="a pt" style="left:700px;top:568px">Edge</div>
<div class="a pt" style="right:7px;top:568px">Negative</div>
<div class="a" style="left:10px;top:582px;font-size:16px;line-height:18px;color:#404040;-webkit-text-stroke:0.8px #404040">LeCroy</div><div class="a" style="left:10px;top:597px;width:43px;height:2px;background:#404040"></div>
<div class="a" style="left:665px;top:586px;font-size:12.2px;line-height:13px;color:#000">12/6/2021 2:01:13 PM</div>
</body></html>
